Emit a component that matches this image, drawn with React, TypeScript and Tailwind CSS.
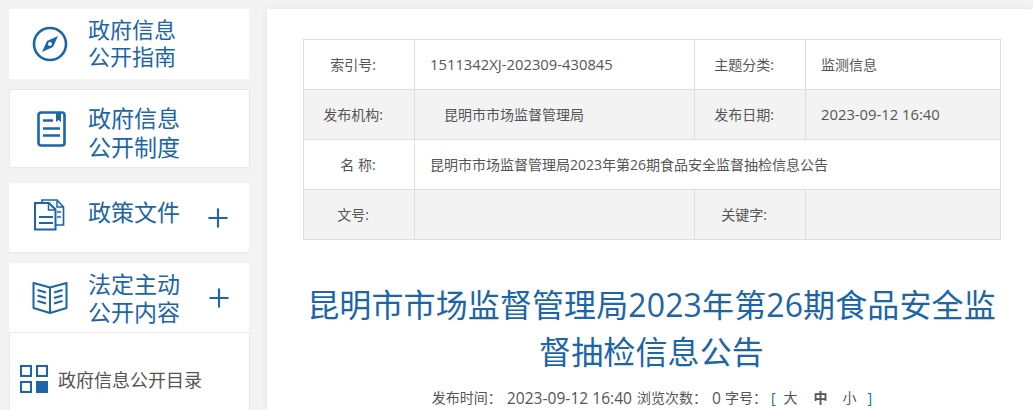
import React from 'react';
import { Plus } from 'lucide-react';

const NAV_FONT = "font-['Liberation_Sans','Noto_Sans_CJK_SC',sans-serif]";
const BODY_FONT = "font-['Open_Sans','Noto_Sans_CJK_SC',sans-serif]";

const CompassIcon = () => (
  <svg width="36" height="36" viewBox="0 0 36 36" fill="none">
    <circle cx="18" cy="18" r="16" stroke="#1b65a9" strokeWidth="2.6" />
    <path d="M26 10 L21 21 L10 26 L15 15 Z" fill="#1b65a9" />
    <circle cx="18" cy="18" r="2" fill="#fff" />
  </svg>
);

const DocIcon = () => (
  <svg width="30" height="36" viewBox="0 0 30 36" fill="none">
    <rect x="1.5" y="1.5" width="26" height="33" rx="2.5" stroke="#1b65a9" strokeWidth="2.6" />
    <path d="M6 9.5H16M6 17.5H23M6 24.5H23" stroke="#1b65a9" strokeWidth="2.4" />
    <path d="M19 2H24V11L21.5 9L19 11Z" fill="#1b65a9" />
  </svg>
);

const FilesIcon = () => (
  <svg width="31" height="32" viewBox="0 0 31 32" fill="none">
    <path d="M21 26H29.5V8L23 1H8V4" stroke="#1b65a9" strokeWidth="1.7" />
    <path d="M1 4H15L21.5 10.5V30.5H1Z" fill="#fff" stroke="#1b65a9" strokeWidth="2" />
    <path d="M14.5 4V11H21.5M23 2V8H29" stroke="#1b65a9" strokeWidth="1.5" />
    <path d="M5 18H19M5 24H19" stroke="#1b65a9" strokeWidth="1.8" />
    <path d="M23 13H27M23 18H27" stroke="#1b65a9" strokeWidth="1.3" />
  </svg>
);

const BookIcon = () => (
  <svg width="36" height="34" viewBox="0 0 36 34" fill="none">
    <path d="M18 6.5L1.5 2V27L18 32L34.5 27V2L18 6.5ZV32" stroke="#1b65a9" strokeWidth="2" strokeLinejoin="round" />
    <path d="M5.5 9L14 11.5M5.5 14.5L14 17M5.5 20L14 22.5M30.5 9L22 11.5M30.5 14.5L22 17M30.5 20L22 22.5" stroke="#1b65a9" strokeWidth="2" />
  </svg>
);

const GridIcon = () => (
  <svg width="28" height="28" viewBox="0 0 28 28" fill="none">
    <rect x="1" y="1" width="10" height="10" stroke="#1b65a9" strokeWidth="2" />
    <rect x="17" y="1" width="10" height="10" stroke="#1b65a9" strokeWidth="2" />
    <rect x="1" y="17" width="10" height="10" stroke="#1b65a9" strokeWidth="2" />
    <rect x="16" y="16" width="12" height="12" fill="#1b65a9" />
  </svg>
);

const rows = [
  { a: '索引号:', b: '1511342XJ-202309-430845', bLatin: true, c: '主题分类:', d: '监测信息' },
  { a: '发布机构:', b: '\u3000昆明市市场监督管理局', c: '发布日期:', d: '2023-09-12 16:40', dLatin: true, shade: true },
  { a: '名 称:', b: '昆明市市场监督管理局2023年第26期食品安全监督抽检信息公告', span: true },
  { a: '文号:', b: '', c: '关键字:', d: '', shade: true },
];

export default function App() {
  return (
    <div className={`flex h-[410px] w-[1033px] overflow-hidden bg-[#f3f3f3] pl-[9px] pt-[9px] ${BODY_FONT}`}>
      <div className={`flex w-[241px] shrink-0 flex-col ${NAV_FONT}`}>
        <div className="flex h-[70px] w-[240px] shrink-0 items-center bg-white pl-[23px]">
          <CompassIcon />
          <div className="ml-[20px] text-[22px] leading-[27px] text-[#1b65a9]">政府信息<br />公开指南</div>
        </div>
        <div className="mt-[10px] flex h-[79px] shrink-0 items-center border border-[#e8e8e8] bg-white pl-[27px]">
          <DocIcon />
          <div className="ml-[21px] mt-[10px] text-[23px] leading-[29px] text-[#1b65a9]">政府信息<br />公开制度</div>
        </div>
        <div className="mt-[15px] flex h-[69px] w-[240px] shrink-0 items-center bg-white pb-[6px] pl-[25px] shadow-[0_1px_1px_#e8e8e8]">
          <FilesIcon />
          <div className="mb-[2px] ml-[23px] text-[23px] leading-[29px] text-[#1b65a9]">政策文件</div>
          <Plus size={30} strokeWidth={1.7} className="ml-[23px] mt-[6px] text-[#1b65a9]" />
        </div>
        <div className="mt-[11px] flex h-[69px] w-[240px] shrink-0 items-center bg-white pl-[23px]">
          <BookIcon />
          <div className="ml-[20px] mt-[2px] text-[23px] leading-[28px] text-[#1b65a9]">法定主动<br />公开内容</div>
          <Plus size={30} strokeWidth={1.7} className="ml-[24px] text-[#1b65a9]" />
        </div>
        <div className="flex h-[90px] shrink-0 items-start border border-b-0 border-[#e8e8e8] bg-white pl-[10px] pt-[32px]">
          <GridIcon />
          <span className="ml-[10px] text-[18px] leading-[32px] text-[#555]">政府信息公开目录</span>
        </div>
      </div>

      <div className="ml-[17px] min-w-0 flex-1 bg-white px-[36px] pt-[30px] shadow-[0_0_6px_#e4e4e4]">
        <table className="w-[697px] table-fixed border-collapse text-[14px] text-[#555]">
          <colgroup>
            <col className="w-[111px]" />
            <col className="w-[280px]" />
            <col className="w-[111px]" />
            <col className="w-[195px]" />
          </colgroup>
          <tbody>
            {rows.map((row) => (
              <tr key={row.a} className={`h-[50px] ${row.shade ? 'bg-[#f3f3f3]' : 'bg-white'}`}>
                <td className={`border border-[#dedede] text-center ${row.span ? 'pr-[2px]' : 'pr-[12px]'}`}>{row.a}</td>
                <td colSpan={row.span ? 3 : 1} className={`border border-[#dedede] pl-[15px] ${row.bLatin ? 'text-[14.8px]' : ''}`}>{row.b}</td>
                {!row.span && <td className="border border-[#dedede] pr-[12px] text-center">{row.c}</td>}
                {!row.span && <td className={`border border-[#dedede] pl-[15px] ${row.dLatin ? 'text-[14.8px]' : ''}`}>{row.d}</td>}
              </tr>
            ))}
          </tbody>
        </table>
        <h1 className="mt-[41px] pl-[3px] text-center text-[32px] font-normal leading-[47px] tracking-[0.12px] text-[#1b65a9]">
          昆明市市场监督管理局2023年第26期食品安全监督抽检信息公告
        </h1>
        <div className="mt-[13px] flex items-center justify-center whitespace-pre pl-[4px] text-[14px] leading-[20px] text-[#555]">
          <span>{'发布时间\uFF1A'}</span>
          <span className="ml-[5px] text-[15.6px]">2023-09-12 16:40</span>
          <span className="ml-[5px]">{'浏览次数\uFF1A'}</span>
          <span className="ml-[5px] text-[15.6px]">0</span>
          <span className="ml-[4px]">{'字号\uFF1A'}</span>
          <span className="ml-[4px] text-[#1b65a9]">[</span>
          <span className="ml-[8px]">大</span>
          <span className="ml-[16px] font-bold">中</span>
          <span className="ml-[15px]">小</span>
          <span className="ml-[11px] text-[#1b65a9]">]</span>
        </div>
      </div>
    </div>
  );
}
